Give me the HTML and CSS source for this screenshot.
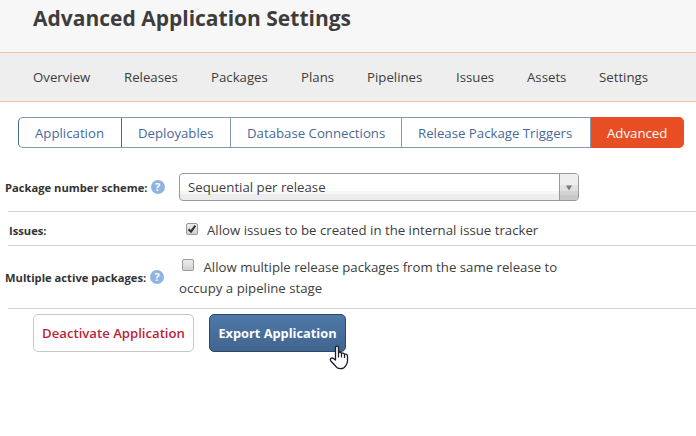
FILE: index.html
```
<!DOCTYPE html>
<html lang="en">
<head>
<meta charset="utf-8">
<title>Advanced Application Settings</title>
<link rel="stylesheet" href="styles.css">
</head>
<body>
<header class="header"><h1>Advanced Application Settings</h1></header>
<nav class="nav">
  <a>Overview</a><a>Releases</a><a>Packages</a><a>Plans</a><a>Pipelines</a><a>Issues</a><a>Assets</a><a>Settings</a>
</nav>
<div class="tabs">
  <a class="tab">Application</a><a class="tab">Deployables</a><a class="tab">Database Connections</a><a class="tab">Release Package Triggers</a><a class="tab active">Advanced</a>
</div>
<main class="settings">
  <div class="row scheme">
    <label class="label">Package number scheme:<span class="help">?</span></label>
    <div class="select"><span class="value">Sequential per release</span><span class="arrow"><svg width="8" height="6" viewBox="0 0 8 6"><path d="M1 .5H7L4 5.5Z" fill="#777"/></svg></span></div>
  </div>
  <div class="row issues">
    <label class="label">Issues:</label>
    <div class="field"><span class="check"><svg width="10" height="10" viewBox="0 0 10 10"><path d="M1.5 5.2L4 7.6L8.3 1.6" fill="none" stroke="#333" stroke-width="2.1"/></svg></span><span>Allow issues to be created in the internal issue tracker</span></div>
  </div>
  <div class="row multiple">
    <label class="label">Multiple active packages:<span class="help">?</span></label>
    <div class="field"><span class="check"></span>Allow multiple release packages from the same release to<br>occupy a pipeline stage</div>
  </div>
</main>
<div class="actions">
  <button class="btn danger">Deactivate Application</button>
  <div class="export">
    <button class="btn primary">Export Application</button>
    <svg class="cursor" width="20" height="25" viewBox="0 0 20 25"><path d="M6.5 15V2.7C6.5 0.5 9.5 0.5 9.5 2.7V8C10.5 6.7 12.3 7.1 12.5 8.6C13.5 7.6 15.2 8 15.5 9.4C16.8 8.7 18.5 9.3 18.5 11V16C18.5 18.5 17.5 19.5 16.5 21C15.5 23.2 14 23.7 11.5 23.7C8.5 23.7 7.5 22.8 6.5 21L2 16.2C0.3 14 2.3 12.2 4.4 13.4Z" fill="#fff" stroke="#1c1c28" stroke-width="1.3" stroke-linejoin="round"/><path d="M9.5 8V12.5M12.5 8.6V12.5M15.5 9.4V13" stroke="#1c1c28" stroke-width="1.2"/></svg>
  </div>
</div>
</body>
</html>
```
FILE: styles.css
```
* { box-sizing: border-box; }
body {
  margin: 0;
  min-height: 436px;
  background: #fff;
  color: #3d3d3d;
  font: 13.22px/21px "Open Sans", "Noto Sans", sans-serif;
}
.header {
  height: 53px;
  padding: 4px 33px 0;
  background: #f7f7f7;
  border-bottom: 1px solid #f6bda9;
}
h1 { margin: 0; font-size: 21px; line-height: 28px; font-weight: 700; }
.nav {
  display: grid;
  grid-template-columns: 91px 87px 90px 66px 89px 71px 72px 60px;
  align-items: center;
  height: 49px;
  padding-left: 33px;
  background: #eee;
  border-bottom: 1px solid #f6bda9;
}
.tabs {
  display: grid;
  grid-template-columns: 104px 109px 171px 189px 93px;
  width: 666px;
  height: 31px;
  margin: 15px 0 0 18px;
}
.tab {
  display: flex;
  align-items: center;
  padding-left: 16px;
  padding-top: 1px;
  border: 1px solid #8499ad;
  border-left-width: 0;
  color: #48699a;
  white-space: nowrap;
}
.tab:first-child { border-left: 1px solid #48699a; border-right-color: #48699a; border-radius: 5px 0 0 5px; }
.tab.active { background: #e84e24; border-color: #e84e24; color: #fff; font-weight: 500; border-radius: 0 5px 5px 0; }
.settings { margin: 20px 0 0 8px; }
.row { display: flex; border-bottom: 1px solid #d3d3d3; }
.label {
  display: flex;
  align-items: center;
  flex: none;
  width: 175px;
  margin-left: -4px;
  padding-left: 1px;
  font-size: 11.2px;
  font-weight: 700;
  color: #333;
}
.help {
  width: 14px;
  height: 14px;
  margin-left: 4px;
  border-radius: 50%;
  background: #91b3e2;
  color: #fff;
  font-size: 11px;
  line-height: 14px;
  text-align: center;
}
.scheme { height: 44px; padding-top: 5px; align-items: flex-start; }
.scheme .label { height: 28px; }
.scheme .help { margin-left: 3px; }
.select {
  display: flex;
  width: 400px;
  height: 28px;
  border: 1px solid #999;
  border-radius: 4px;
  overflow: hidden;
  background: linear-gradient(#fff 64%, #f6f6f6 64% 77%, #ededed 77%);
}
.value { flex: 1; padding: 3px 8px; }
.arrow {
  display: flex;
  align-items: center;
  justify-content: center;
  width: 19px;
  padding-top: 2px;
  border-left: 1px solid #999;
  background: linear-gradient(#eee 0 44%, #e0e0e0 44% 64%, #d3d3d3 64% 80%, #c8c8c8 80%);
}
.issues { height: 34px; }
.issues .label { padding: 4px 0 0 5px; }
.issues .field { padding: 8px 0 0 7px; }
.issues .check { margin-right: 9px; vertical-align: 1px; }
.multiple { height: 63px; }
.multiple .label { padding-top: 0; }
.multiple .field { padding: 11px 0 0 3px; margin-left: -3px; }
.check {
  display: inline-flex;
  align-items: center;
  justify-content: center;
  width: 12px;
  height: 12px;
  margin: 0 9.5px 0 0;
  border: 1px solid #999;
  border-radius: 2px;
  background: linear-gradient(#ececec, #d2d2d2);
  vertical-align: 1px;
}
.multiple .check { margin-left: 3px; }
.actions { display: flex; gap: 15px; padding: 5px 0 0 33px; }
.btn {
  display: block;
  height: 38px;
  padding: 0 0 1px;
  border-radius: 5px;
  font: 600 13.15px "Open Sans", "Noto Sans", sans-serif;
  white-space: nowrap;
}
.danger { width: 161px; border: 1px solid #c8c8c8; background: #fff; color: #ba1f3c; }
.export { position: relative; }
.primary {
  width: 137px;
  border: 1px solid #2d4766;
  background: linear-gradient(#4e78a8, #41658f);
  color: #fff;
  font-size: 12.8px;
  font-weight: 700;
}
.cursor { position: absolute; left: 120px; top: 31px; }
```
